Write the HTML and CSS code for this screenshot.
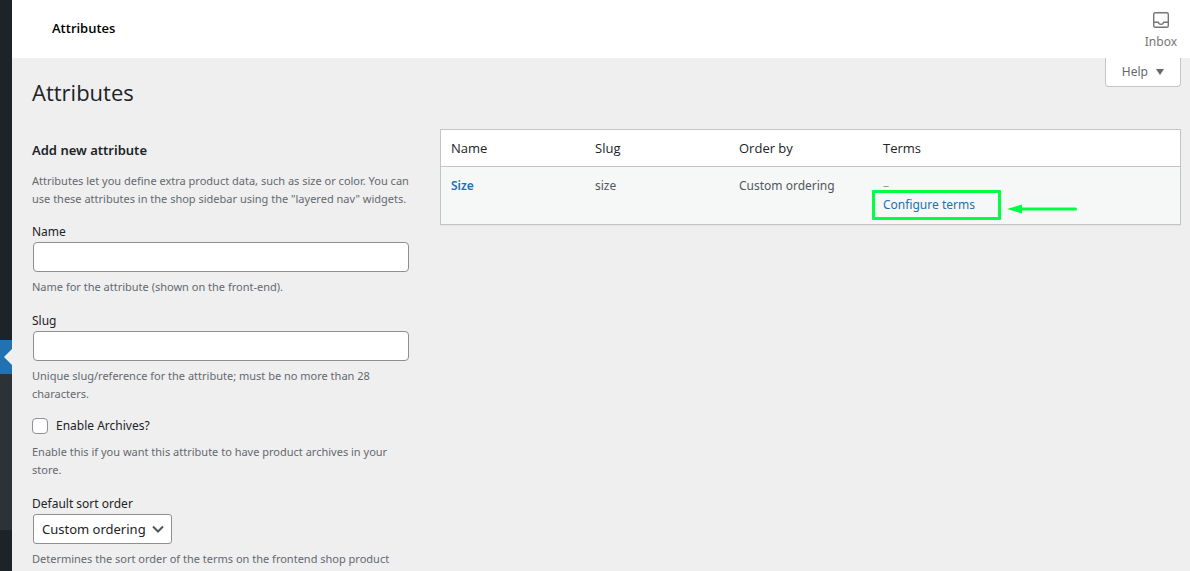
FILE: index.html
```html
<!DOCTYPE html>
<html lang="en">
<head>
<meta charset="utf-8">
<title>Attributes</title>
<link rel="stylesheet" href="styles.css">
</head>
<body>
<div class="admin">
  <nav class="side-menu" aria-label="Admin menu">
    <div class="side-current"></div>
    <div class="side-submenu"></div>
  </nav>
  <div class="main">
    <header class="top-bar">
      <h2 class="top-title">Attributes</h2>
      <button class="inbox" type="button">
        <svg class="inbox-icon" viewBox="0 0 16 16" fill="none" stroke="currentColor" stroke-width="1.4" aria-hidden="true">
          <rect x=".7" y=".7" width="14.6" height="14.6" rx="1.6"/>
          <path d="M1 10.3h4.300c.4 1.400 1.400 2.100 2.700 2.100s2.300-.7 2.700-2.100H15"/>
        </svg>
        <span>Inbox</span>
      </button>
    </header>
    <main class="page">
      <div class="heading-row">
        <h1 class="page-title">Attributes</h1>
        <button class="help" type="button">Help
          <svg class="help-arrow" viewBox="0 0 8 6" aria-hidden="true"><path d="M0 0h8L4 6z" fill="currentColor"/></svg>
        </button>
      </div>
      <div class="columns">
        <form class="attribute-form">
          <h2 class="form-title">Add new attribute</h2>
          <p class="hint intro">Attributes let you define extra product data, such as size or color. You can<br>use these attributes in the shop sidebar using the "layered nav" widgets.</p>
          <div class="field">
            <label for="name">Name</label>
            <input class="text-input" id="name" type="text">
            <p class="hint">Name for the attribute (shown on the front-end).</p>
          </div>
          <div class="field">
            <label for="slug">Slug</label>
            <input class="text-input" id="slug" type="text">
            <p class="hint">Unique slug/reference for the attribute; must be no more than 28<br>characters.</p>
          </div>
          <div class="field check-field">
            <label class="check-label" for="archives"><input class="check" id="archives" type="checkbox">Enable Archives?</label>
            <p class="hint">Enable this if you want this attribute to have product archives in your<br>store.</p>
          </div>
          <div class="field">
            <label for="order">Default sort order</label>
            <div class="select-wrap">
              <select class="select" id="order"><option>Custom ordering</option></select>
              <svg class="chevron" viewBox="0 0 12 8" fill="none" stroke="currentColor" stroke-width="2" aria-hidden="true"><path d="M1 1.500l5 5 5-5"/></svg>
            </div>
            <p class="hint">Determines the sort order of the terms on the frontend shop product</p>
          </div>
        </form>
        <div class="table-column">
          <table class="attributes">
            <thead>
              <tr><th class="col" scope="col">Name</th><th class="col" scope="col">Slug</th><th class="col" scope="col">Order by</th><th scope="col">Terms</th></tr>
            </thead>
            <tbody>
              <tr>
                <td><a class="name-link" href="#size">Size</a></td>
                <td>size</td>
                <td>Custom ordering</td>
                <td><div class="terms"><span class="no-terms">–</span><a href="#terms">Configure terms</a>
                  <div class="callout"></div>
                  <svg class="callout-arrow" viewBox="0 0 70 10" aria-hidden="true"><path d="M12 5h56.500" stroke="currentColor" stroke-width="3" stroke-linecap="round"/><path d="M0 5L15 .5v9z" fill="currentColor"/></svg>
                </div></td>
              </tr>
            </tbody>
          </table>
        </div>
      </div>
    </main>
  </div>
</div>
</body>
</html>
```
FILE: styles.css
```css
* { box-sizing: border-box; }
body {
  margin: 0;
  background: #efefef;
  color: #1d2327;
  font: 12px/18px "Noto Sans", "Open Sans", sans-serif;
}
h1, h2, p { margin: 0; }
button, input, select { font: inherit; color: inherit; }
a { color: #2271b1; text-decoration: none; }

.admin { display: flex; height: 100vh; overflow: hidden; }
.side-menu { flex: 0 0 12px; background: #1d2327; padding-top: 340px; }
.side-current {
  display: flex;
  justify-content: flex-end;
  align-items: center;
  height: 34px;
  background: #2271b1;
}
.side-current::after {
  content: "";
  border: 8px solid transparent;
  border-left-width: 0;
  border-right-color: #efefef;
}
.side-submenu { height: 156px; background: #2c3338; }

.main { flex: 1; min-width: 0; }
.top-bar {
  display: flex;
  justify-content: space-between;
  align-items: center;
  height: 58px;
  padding: 0 13px 2px 40px;
  background: #fff;
}
.top-title { color: #000; font: 600 13px/18px "Open Sans", "Noto Sans", sans-serif; }
.inbox {
  display: flex;
  flex-direction: column;
  align-items: center;
  gap: 5px;
  padding: 7px 0 0;
  border: 0;
  background: none;
  color: #757575;
}
.inbox-icon { width: 16px; height: 16px; }

.page { padding: 0 9px 0 20px; }
.heading-row { display: flex; justify-content: space-between; align-items: flex-start; }
.page-title { padding-top: 19px; font: 400 22px/30px "Open Sans", "Noto Sans", sans-serif; }
.help {
  display: flex;
  align-items: center;
  gap: 8px;
  height: 29px;
  padding: 0 16px;
  border: 1px solid #c3c4c7;
  border-top: 0;
  border-radius: 0 0 4px 4px;
  background: #fff;
  color: #646970;
}
.help-arrow { width: 8px; height: 6px; }

.columns { display: flex; gap: 12px; padding-top: 22px; }
.attribute-form { flex: 0 0 396px; min-width: 0; padding-top: 12px; }
.form-title { font-size: 13px; line-height: 18px; font-weight: 600; }
.hint { color: #646970; font-size: 11px; line-height: 18px; white-space: nowrap; }
.intro { padding: 13px 0 14px; }
.field { margin-bottom: 15px; }
.field > label { display: block; padding: 1px 0; }
.text-input {
  display: block;
  width: 95%;
  height: 30px;
  margin: 0 1px 6px;
  border: 1px solid #8c8f94;
  border-radius: 4px;
  background: #fff;
}
.check-field { margin-top: -1px; }
.field > .check-label { display: flex; align-items: center; gap: 8px; padding: 0 0 8px; }
.check {
  appearance: none;
  width: 16px;
  height: 16px;
  margin: 0;
  border: 1px solid #8c8f94;
  border-radius: 4px;
  background: #fff;
}
.select-wrap { display: grid; width: fit-content; align-items: center; margin: 0 1px 6px; }
.select {
  grid-area: 1 / 1;
  appearance: none;
  height: 30px;
  padding: 0 25px 0 8px;
  border: 1px solid #8c8f94;
  border-radius: 3px;
  background: #fff;
  font-size: 13px;
}
.chevron {
  grid-area: 1 / 1;
  justify-self: end;
  width: 12px;
  height: 8px;
  margin-right: 8px;
  color: #50575e;
  pointer-events: none;
}

.table-column { flex: 1; min-width: 0; }
.attributes {
  width: 100%;
  table-layout: fixed;
  border: 1px solid #c3c4c7;
  border-spacing: 0;
  background: #fff;
  box-shadow: 0 1px 1px rgba(0, 0, 0, .04);
}
.attributes th {
  padding: 8px 10px;
  border-bottom: 1px solid #c3c4c7;
  font: 400 13px/20px "Open Sans", "Noto Sans", sans-serif;
  text-align: left;
}
.attributes .col { width: 144px; }
.attributes td {
  padding: 9px 10px 10px;
  background: #f6f7f7;
  color: #50575e;
  line-height: 19px;
  vertical-align: top;
}
.name-link { font-weight: 600; }
.terms { position: relative; }
.terms > a, .no-terms { display: block; }
.no-terms { color: #999; }
.callout {
  position: absolute;
  top: 14px;
  left: -11px;
  width: 129px;
  height: 30px;
  border: 3px solid #00ff40;
  border-radius: 1px;
  pointer-events: none;
}
.callout-arrow {
  position: absolute;
  top: 28px;
  left: 124px;
  width: 70px;
  height: 10px;
  color: #00ff40;
}
```
